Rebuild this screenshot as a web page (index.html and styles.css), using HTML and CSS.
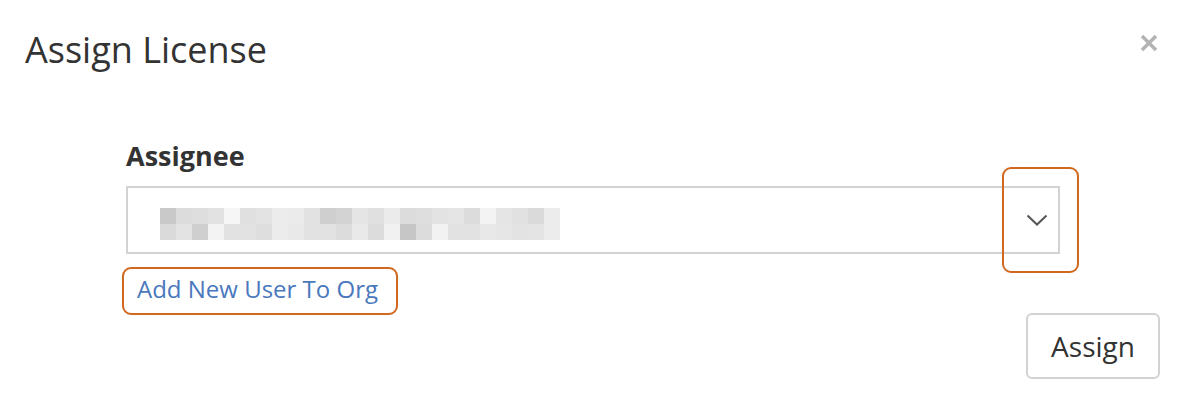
FILE: index.html
```html
<!DOCTYPE html>
<html lang="en">
<head>
<meta charset="UTF-8" />
<meta name="viewport" content="width=device-width, initial-scale=1.0">
<title>Assign License</title>
<link rel="stylesheet" href="styles.css">
</head>
<body>

<div class="modal">
  <header class="modal-header">
    <h1>Assign License</h1>
    <button class="close" aria-label="Close">
      <svg width="18" height="18" viewBox="0 0 18 18">
        <path d="M2 2 L16 16 M16 2 L2 16" stroke="#b3b3b3" stroke-width="3.4" />
      </svg>
    </button>
  </header>

  <section class="modal-body">
    <label class="field-label">Assignee</label>
    <div class="select">
      <!-- redacted user name -->
      <div class="blurred" id="blurred"></div>
      <span class="chevron">
        <svg width="22" height="13" viewBox="0 0 22 13">
          <path d="M1.5 1.5 L11 10.5 L20.5 1.5" fill="none" stroke="#555" stroke-width="2" />
        </svg>
      </span>
      <span class="mark mark-chevron"></span>
    </div>
    <a class="add-user" href="#">Add New User To Org<span class="mark mark-link"></span></a>
  </section>

  <footer class="modal-footer">
    <button class="btn">Assign</button>
  </footer>
</div>

<script>
  // pixelated placeholder for the selected user's name
  const shades = [
    ['#c9c9c9','#dcdcdc','#dedede','#e2e2e2','#f6f6f6','#e0e0e0','#e3e3e3','#ececec','#ebebeb','#e2e2e2','#cfcfcf','#d3d3d3','#e5e5e5','#e0e0e0','#ebebeb','#dcdcdc','#dedede','#e3e3e3','#e5e5e5','#dcdcdc','#f3f3f3','#e5e5e5','#e1e1e1','#dadada','#ececec'],
    ['#dadada','#e3e3e3','#cfcfcf','#f3f3f3','#e2e2e2','#e2e2e2','#dedede','#ececec','#e9e9e9','#e2e2e2','#e2e2e2','#dcdcdc','#e9e9e9','#dcdcdc','#f1f1f1','#c6c6c6','#dcdcdc','#f2f2f2','#e2e2e2','#e2e2e2','#e8e8e8','#e6e6e6','#e3e3e3','#e4e4e4','#ececec']
  ];
  const box = document.getElementById('blurred');
  shades.forEach(row => {
    row.forEach(c => {
      const cell = document.createElement('span');
      cell.style.background = c;
      box.appendChild(cell);
    });
  });
</script>

</body>
</html>
```

FILE: styles.css
```css
/* Base styles */
body {
  font-family: 'Open Sans', 'Liberation Sans', sans-serif;
  margin: 0;
  padding: 0;
  background: #fff;
  color: #333;
}

.modal {
  width: 1188px;
  height: 407px;
  box-sizing: border-box;
}

/* Header */
.modal-header {
  display: flex;
  justify-content: space-between;
  align-items: flex-start;
  padding: 27px 30px 0 25px;
  height: 141px;
  box-sizing: border-box;
}

.modal-header h1 {
  margin: 0;
  font-size: 36px;
  font-weight: 400;
  line-height: 46px;
  color: #333;
}

.close {
  display: flex;
  background: none;
  border: none;
  padding: 0;
  margin-top: 7px;
  cursor: pointer;
}

/* Body */
.modal-body {
  padding: 0 128px 0 126px;
}

.field-label {
  display: block;
  font-size: 27px;
  font-weight: 700;
  line-height: 30px;
  margin-bottom: 15px;
}

.select {
  position: relative;
  display: flex;
  align-items: flex-start;
  justify-content: space-between;
  height: 68px;
  border: 2px solid #d2d2d2;
  box-sizing: border-box;
  padding: 0 10px 0 32px;
}

.blurred {
  display: grid;
  grid-template-columns: repeat(25, 16px);
  grid-auto-rows: 16px;
  margin-top: 20px;
}

.chevron {
  display: flex;
  width: 22px;
  margin-top: 26px;
}

/* Orange callouts drawn over the form */
.mark {
  position: absolute;
  border: 2px solid #d0691f;
  border-radius: 9px;
  pointer-events: none;
}

.mark-chevron {
  top: -21px;
  right: -21px;
  width: 77px;
  height: 106px;
  box-sizing: border-box;
}

.add-user {
  position: relative;
  display: inline-block;
  margin: 20px 0 0 11px;
  font-size: 24px;
  line-height: 30px;
  color: #4a78bd;
  text-decoration: none;
}

.mark-link {
  top: -7px;
  left: -15px;
  right: -20px;
  bottom: -11px;
}

/* Footer */
.modal-footer {
  display: flex;
  justify-content: flex-end;
  padding: 0 28px 0 0;
  margin-top: 9px;
}

.btn {
  font-family: 'Open Sans', 'Liberation Sans', sans-serif;
  font-size: 28px;
  color: #333;
  background: #fff;
  border: 2px solid #d2d2d2;
  border-radius: 6px;
  width: 134px;
  height: 66px;
  padding: 0;
  cursor: pointer;
}
```
